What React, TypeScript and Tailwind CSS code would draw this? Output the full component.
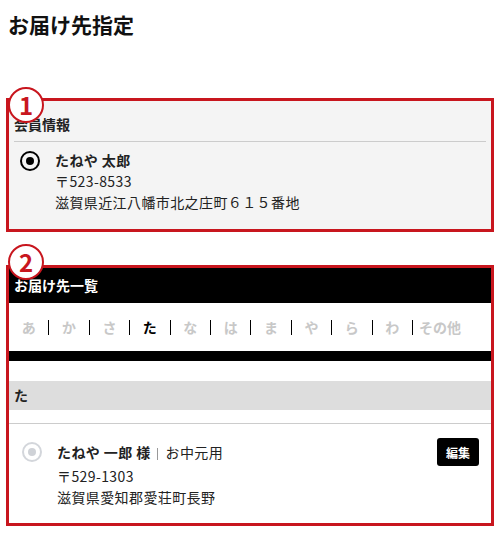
import React from 'react'

const kana = ['あ', 'か', 'さ', 'た', 'な', 'は', 'ま', 'や', 'ら', 'わ']

const Badge = ({ n, top }: { n: string; top: string }) => {
  return (
    <div
      className={`absolute left-[-1px] ${top} w-[36px] h-[36px] rounded-full border-[2.5px] border-[#c8161e] bg-white flex items-center justify-center text-[#c8161e] text-[24px] font-bold leading-none`}>
      {n}
    </div>
  )
}

const App = () => {
  return (
    <div className="w-[500px] h-[540px] bg-white overflow-hidden text-[#222] font-['Noto_Sans_CJK_JP','Noto_Sans',sans-serif]">
      <h1 className="pt-[9px] pl-[8px] text-[21px] leading-[30px] font-bold text-[#111]">お届け先指定</h1>

      {/* member info */}
      <div className="relative mt-[59px] mx-[6px] border-[3px] border-[#c8161e] bg-[#f4f4f4]">
        <div className="mx-[5px] pt-[13px] pb-[7px] border-b border-[#cccccc] text-[14px] leading-[20px] font-bold">
          会員情報
        </div>
        <div className="flex pl-[11px] pt-[8px] pb-[16px] text-[14px] leading-[21px] tracking-[0.4px]">
          <div className="h-[21px] flex items-center">
            <span className="w-[20px] h-[20px] rounded-full border-2 border-black flex items-center justify-center">
              <span className="w-[8px] h-[8px] rounded-full bg-black" />
            </span>
          </div>
          <div className="ml-[15px]">
            <p className="font-bold">たねや 太郎</p>
            <p>〒523-8533</p>
            <p>滋賀県近江八幡市北之庄町６１５番地</p>
          </div>
        </div>
        <Badge n="1" top="top-[-14px]" />
      </div>

      {/* address list */}
      <div className="relative mt-[33px] mx-[6px] border-[3px] border-[#c8161e] bg-white">
        <div className="h-[35px] bg-black flex items-center px-[5px] text-white text-[14px] font-bold">
          お届け先一覧
        </div>
        <div className="h-[48px] flex items-center text-[14px] font-bold">
          {kana.map((k) => (
            <React.Fragment key={k}>
              <span className={`w-[39.4px] text-center ${k === 'た' ? 'text-black' : 'text-[#c8c8c8]'}`}>{k}</span>
              <span className="w-px h-[15px] bg-black" />
            </React.Fragment>
          ))}
          <span className="pl-[6px] text-[#c8c8c8]">その他</span>
        </div>
        <div className="h-[10px] bg-black" />
        <div className="h-[20px]" />
        <div className="h-[29px] bg-[#dddddd] flex items-center px-[5px] text-[14px] font-bold">た</div>
        <div className="h-[14px] border-b border-[#cccccc]" />
        <div className="flex pl-[13px] pr-[12px] pt-[14px] pb-[15px] text-[14px] leading-[21px] tracking-[0.4px]">
          <div className="h-[28px] flex items-center">
            <span className="w-[20px] h-[20px] rounded-full border-2 border-[#d3d6db] flex items-center justify-center">
              <span className="w-[8px] h-[8px] rounded-full bg-[#cfd2d7]" />
            </span>
          </div>
          <div className="ml-[15px] flex-1">
            <div className="h-[28px] flex items-center justify-between">
              <p>
                <span className="font-bold">たねや 一郎 様</span>
                <span className="inline-block align-middle w-px h-[12px] bg-[#999] ml-[6px] mr-[8px]" />
                <span>お中元用</span>
              </p>
              <button className="w-[42px] h-[28px] rounded-[3px] bg-black text-white text-[12px] font-bold tracking-normal">
                編集
              </button>
            </div>
            <p>〒529-1303</p>
            <p>滋賀県愛知郡愛荘町長野</p>
          </div>
        </div>
        <Badge n="2" top="top-[-24px]" />
      </div>
    </div>
  )
}

export default App
